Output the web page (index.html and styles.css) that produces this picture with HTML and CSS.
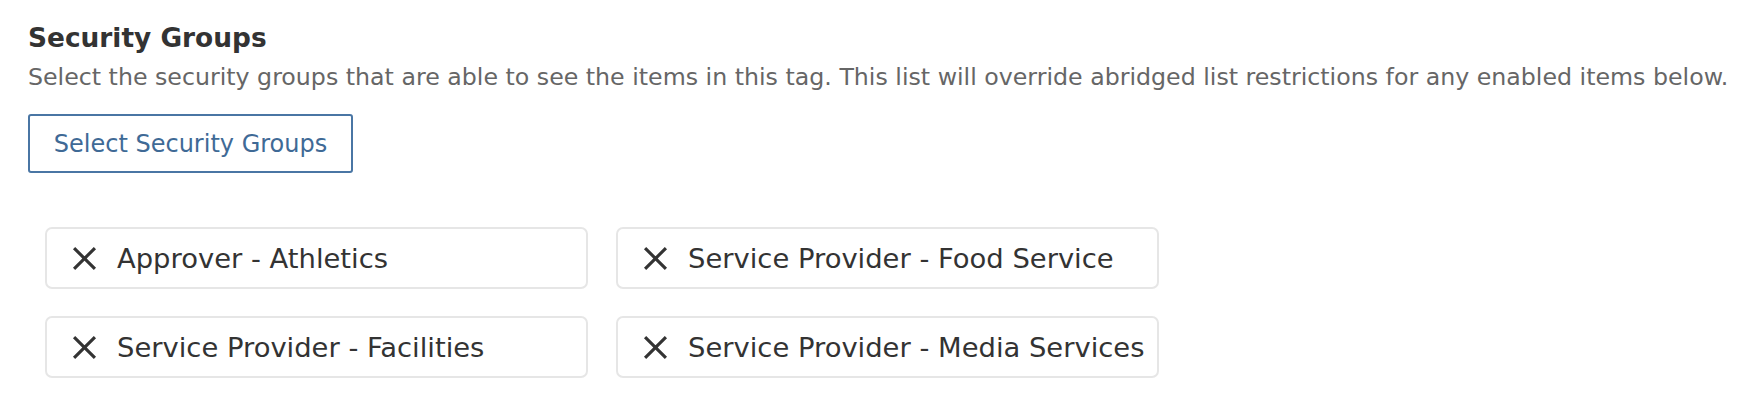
FILE: index.html
```html
<!DOCTYPE html>
<html>
<head>
<meta charset="utf-8">
<link rel="stylesheet" href="styles.css">
</head>
<body>
<section class="panel">
  <h2 class="title">Security Groups</h2>
  <p class="desc">Select the security groups that are able to see the items in this tag. This list will override abridged list restrictions for any enabled items below.</p>
  <button class="select-btn">Select Security Groups</button>
  <ul class="chips">
    <li class="chip"><svg class="x" viewBox="0 0 24 24"><path d="M2 2L22 22M22 2L2 22"/></svg><span>Approver - Athletics</span></li>
    <li class="chip"><svg class="x" viewBox="0 0 24 24"><path d="M2 2L22 22M22 2L2 22"/></svg><span>Service Provider - Food Service</span></li>
    <li class="chip"><svg class="x" viewBox="0 0 24 24"><path d="M2 2L22 22M22 2L2 22"/></svg><span>Service Provider - Facilities</span></li>
    <li class="chip"><svg class="x" viewBox="0 0 24 24"><path d="M2 2L22 22M22 2L2 22"/></svg><span>Service Provider - Media Services</span></li>
  </ul>
</section>
</body>
</html>
```
FILE: styles.css
```css
html, body {
  margin: 0;
  padding: 0;
  background: #fff;
}
.panel {
  padding: 22px 28px 0 28px;
  font-family: "DejaVu Sans", sans-serif;
}
.title {
  margin: 0;
  font-size: 26.4px;
  line-height: 32px;
  font-weight: 700;
  color: #333;
}
.desc {
  margin: 8px 0 0 0;
  font-size: 23.7px;
  line-height: 30px;
  color: #666;
  white-space: nowrap;
}
.select-btn {
  display: block;
  margin-top: 22px;
  width: 325px;
  height: 59px;
  border: 2px solid #4a76a4;
  border-radius: 3px;
  background: #fff;
  color: #3f6a96;
  font-family: inherit;
  font-size: 24px;
  padding: 0;
  cursor: pointer;
}
.chips {
  list-style: none;
  margin: 54px 0 0 17px;
  padding: 0;
  display: grid;
  grid-template-columns: 543px 543px;
  column-gap: 28px;
  row-gap: 27px;
}
.chip {
  box-sizing: border-box;
  height: 62px;
  border: 2px solid #e6e6e6;
  border-radius: 7px;
  display: flex;
  align-items: center;
  padding-left: 25px;
  color: #333;
  font-size: 27.4px;
  white-space: nowrap;
}
.x {
  width: 25px;
  height: 25px;
  margin-right: 20px;
  flex: none;
}
.x path {
  stroke: #333;
  stroke-width: 3;
  fill: none;
}
```
